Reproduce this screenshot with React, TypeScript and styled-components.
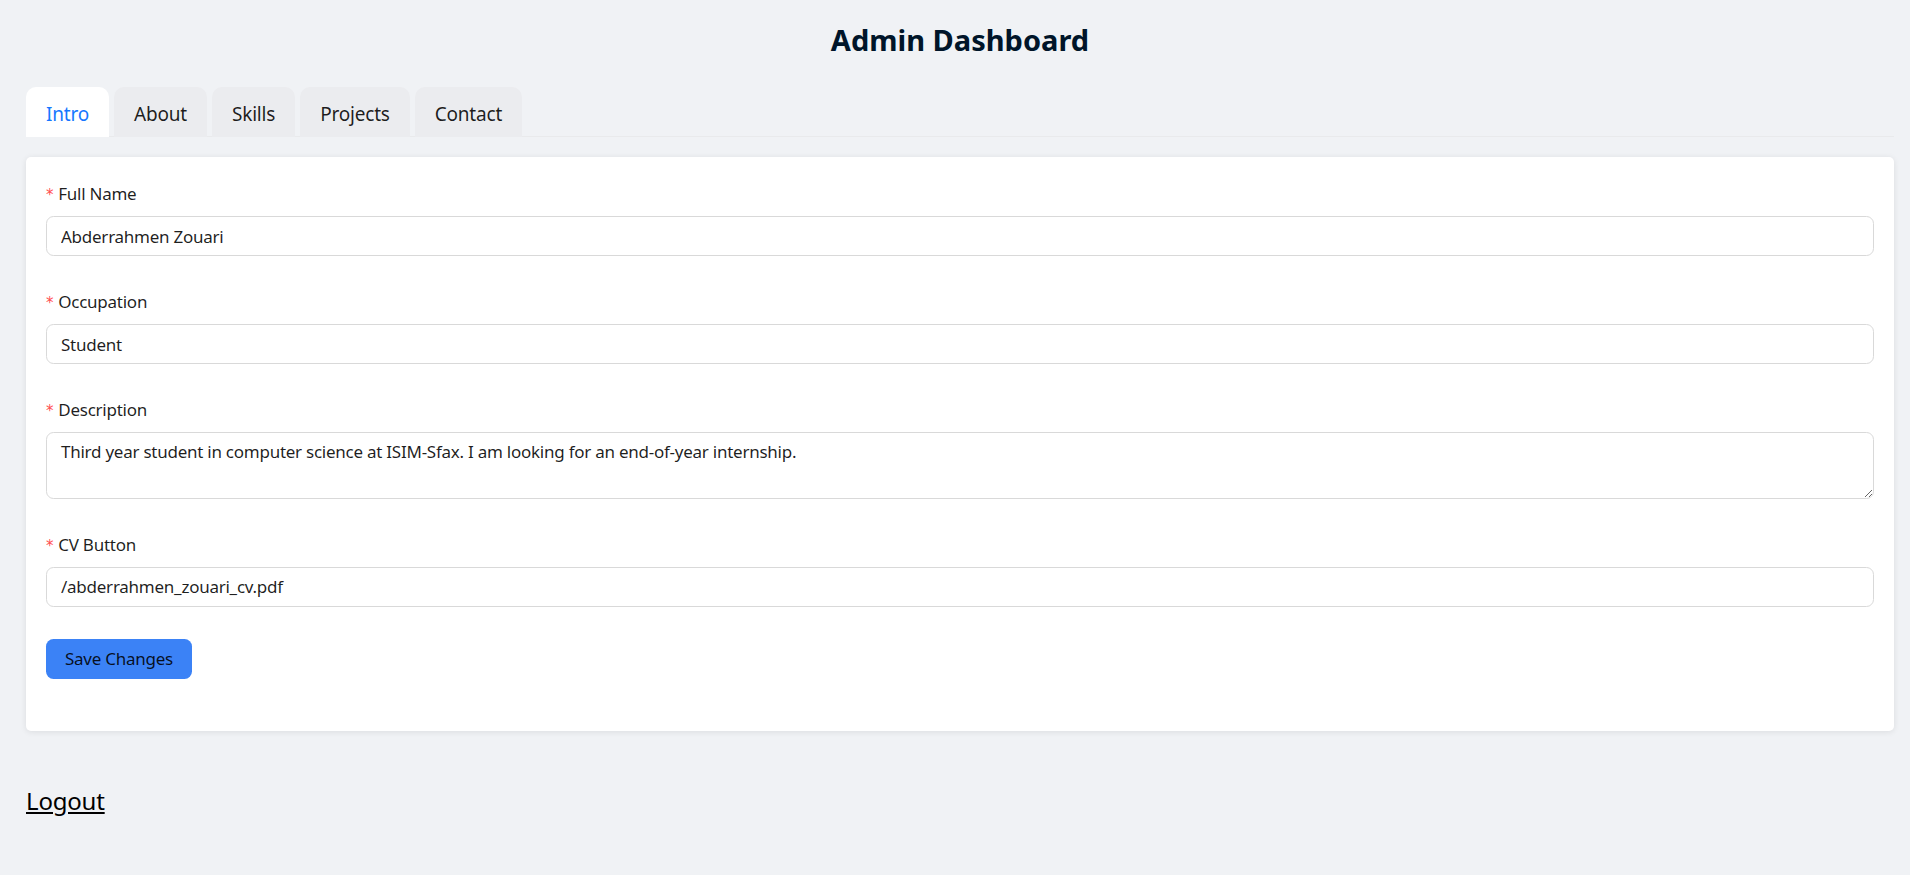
import React, { useState } from 'react'
import styled, { createGlobalStyle } from 'styled-components'

const TABS = ['Intro', 'About', 'Skills', 'Projects', 'Contact']

const GlobalStyle = createGlobalStyle`
    body {
        margin: 0;
        background: #f0f2f5;
        font-family: 'Noto Sans', 'Open Sans', sans-serif;
        color: rgba(0, 0, 0, 0.88);
    }
`

const Page = styled.div`
    padding: 0 16px 40px 26px;
`

const Title = styled.h2`
    margin: 0;
    padding-top: 20px;
    height: 87px;
    box-sizing: border-box;
    text-align: center;
    font-size: 29px;
    font-weight: 700;
    line-height: 40px;
    color: #001529;
`

const TabNav = styled.div`
    display: flex;
    gap: 5px;
    border-bottom: 1px solid #e9eaec;
    margin-bottom: 20px;
`

const Tab = styled.button<{ $active: boolean }>`
    height: 50px;
    padding: 3px 20px 0;
    border: none;
    border-radius: 10px 10px 0 0;
    background: ${props => (props.$active ? '#ffffff' : '#ebecef')};
    color: ${props => (props.$active ? '#1677ff' : 'rgba(0, 0, 0, 0.88)')};
    font-family: inherit;
    font-size: 19px;
    letter-spacing: -0.2px;
    cursor: pointer;
    margin-bottom: -1px;
`

const Card = styled.div`
    background: #ffffff;
    border-radius: 5px;
    box-shadow: 0 1px 6px rgba(0, 0, 0, 0.09);
    padding: 23px 20px 20px;
`

const FormItem = styled.div`
    margin-bottom: 32px;
`

const Label = styled.label`
    display: flex;
    align-items: center;
    height: 27.5px;
    font-size: 17px;
    letter-spacing: -0.25px;
    padding-bottom: 8.5px;
`

const Required = styled.span`
    color: #ff4d4f;
    margin: 4px 5px 0 0;
    font-family: 'DejaVu Sans', sans-serif;
    font-size: 15px;
    line-height: 1;
`

const Input = styled.input`
    display: block;
    box-sizing: border-box;
    width: 100%;
    height: 40px;
    padding: 0 14px;
    border: 1.25px solid #d9d9d9;
    border-radius: 7.5px;
    background: #ffffff;
    font-family: inherit;
    font-size: 17px;
    letter-spacing: -0.25px;
    color: rgba(0, 0, 0, 0.88);
    outline: none;
`

const TextArea = styled.textarea`
    display: block;
    box-sizing: border-box;
    width: 100%;
    height: 66.5px;
    margin-bottom: 2px;
    padding: 5px 14px;
    border: 1.25px solid #d9d9d9;
    border-radius: 7.5px;
    font-family: inherit;
    font-size: 17px;
    letter-spacing: -0.25px;
    line-height: 27.5px;
    color: rgba(0, 0, 0, 0.88);
    resize: vertical;
    outline: none;
`

const SaveButton = styled.button`
    height: 40px;
    padding: 0 19px;
    border: none;
    border-radius: 7.5px;
    background: #3b82f6;
    color: rgba(0, 0, 0, 0.88);
    font-family: inherit;
    font-size: 17px;
    letter-spacing: -0.25px;
    cursor: pointer;
`

const Logout = styled.a`
    display: inline-block;
    margin-top: 53px;
    font-size: 24px;
    letter-spacing: -0.2px;
    color: #000000;
    text-decoration: underline;
    cursor: pointer;
`

export default function App() {
    const [active, setActive] = useState('Intro')
    const [fullName, setFullName] = useState('Abderrahmen Zouari')
    const [occupation, setOccupation] = useState('Student')
    const [description, setDescription] = useState(
        'Third year student in computer science at ISIM-Sfax. I am looking for an end-of-year internship.'
    )
    const [cv, setCv] = useState('/abderrahmen_zouari_cv.pdf')

    return (
        <>
            <GlobalStyle />
            <Page>
                <Title>Admin Dashboard</Title>
                <TabNav>
                    {TABS.map(tab => (
                        <Tab key={tab} $active={tab === active} onClick={() => setActive(tab)}>
                            {tab}
                        </Tab>
                    ))}
                </TabNav>
                <Card>
                    <FormItem>
                        <Label><Required>*</Required>Full Name</Label>
                        <Input value={fullName} onChange={e => setFullName(e.target.value)} />
                    </FormItem>
                    <FormItem>
                        <Label><Required>*</Required>Occupation</Label>
                        <Input value={occupation} onChange={e => setOccupation(e.target.value)} />
                    </FormItem>
                    <FormItem>
                        <Label><Required>*</Required>Description</Label>
                        <TextArea value={description} onChange={e => setDescription(e.target.value)} />
                    </FormItem>
                    <FormItem>
                        <Label><Required>*</Required>CV Button</Label>
                        <Input value={cv} onChange={e => setCv(e.target.value)} />
                    </FormItem>
                    <FormItem>
                        <SaveButton>Save Changes</SaveButton>
                    </FormItem>
                </Card>
                <Logout>Logout</Logout>
            </Page>
        </>
    )
}
